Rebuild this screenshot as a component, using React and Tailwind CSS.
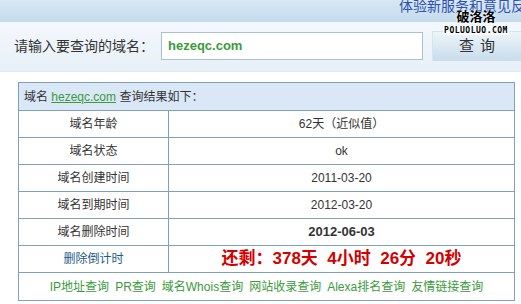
import React from "react";

const rows = [
  { label: "域名年龄", value: "62天（近似值）" },
  { label: "域名状态", value: "ok" },
  { label: "域名创建时间", value: "2011-03-20" },
  { label: "域名到期时间", value: "2012-03-20" },
  { label: "域名删除时间", value: "2012-06-03", bold: true },
];

const links = ["IP地址查询", "PR查询", "域名Whois查询", "网站收录查询", "Alexa排名查询", "友情链接查询"];

export default function App() {
  return (
    <div className="relative w-[521px] h-[304px] overflow-hidden bg-white text-[#333] font-['Liberation_Sans','Noto_Sans_CJK_SC',sans-serif]">
      {/* top strip */}
      <div className="h-[22px] flex justify-end overflow-hidden bg-gradient-to-b from-[#d8e8f4] to-[#c4dbec]">
        <span className="shrink-0 -mt-[3px] -mr-[18px] whitespace-nowrap text-[14px] leading-[18px] text-[#2d4fb3]">
          体验新服务和意见反馈
        </span>
      </div>

      {/* search bar */}
      <div className="h-[50px] flex items-center pl-[14px] bg-gradient-to-b from-[#f3f8fc] to-[#e7f0f7] border-b border-[#dfe9f1]">
        <span className="text-[14px] w-[147px]">请输入要查询的域名：</span>
        <div className="w-[262px] h-[28px] bg-white border border-[#a7c2d1] flex items-center pl-[6px] -mt-[1px]">
          <span className="font-bold text-[13px] text-[#3b9b3b]">hezeqc.com</span>
        </div>
        <button className="ml-[9px] w-[89px] h-[30px] -mt-[1px] bg-gradient-to-b from-[#eef5fa] to-[#c8dceb] border-t border-l border-[#d6e4ee] text-[15px] text-[#333] tracking-[6px] pl-[6px]">
          查询
        </button>
      </div>

      {/* watermark */}
      <div className="absolute top-[9px] left-[441px] w-[70px] flex flex-col items-center">
        <span className="text-[13px] leading-[15px] font-bold text-black [text-shadow:0_0_2px_#fff,0_0_2px_#fff]">
          破洛洛
        </span>
        <span className="mt-[2px] px-[1px] bg-white/70 text-[8px] leading-[9px] font-bold text-black font-['DejaVu_Sans_Mono',monospace] tracking-[0.5px]">
          POLUOLUO.COM
        </span>
      </div>

      {/* result table */}
      <div className="mt-[10px] ml-[18px] w-[497px]">
        <table className="w-full border-collapse text-[12px]">
          <tbody>
            <tr className="h-[28px] bg-[#dae7f6]">
              <td colSpan={2} className="border border-[#7fa2b8] pl-[5px]">
                域名 <span className="text-[#3c9a3c] underline">hezeqc.com</span> 查询结果如下：
              </td>
            </tr>
            {rows.map((r) => (
              <tr key={r.label} className="h-[27px]">
                <td className="w-[150px] border border-[#7fa2b8] text-center">{r.label}</td>
                <td className={`border border-[#7fa2b8] text-center ${r.bold ? "font-bold text-[13px]" : ""}`}>
                  {r.value}
                </td>
              </tr>
            ))}
            <tr className="h-[27px]">
              <td className="border border-[#7fa2b8] text-center text-[#1f5c8c]">删除倒计时</td>
              <td className="border border-[#7fa2b8] text-center text-[17px] font-bold text-[#d40000] whitespace-pre">
                {"还剩：378天  4小时  26分  20秒"}
              </td>
            </tr>
            <tr className="h-[28px]">
              <td colSpan={2} className="border border-[#7fa2b8] text-center text-[#3c9a3c]">
                <div className="flex justify-center gap-[6px]">
                  {links.map((l) => (
                    <span key={l}>{l}</span>
                  ))}
                </div>
              </td>
            </tr>
          </tbody>
        </table>
      </div>
    </div>
  );
}
